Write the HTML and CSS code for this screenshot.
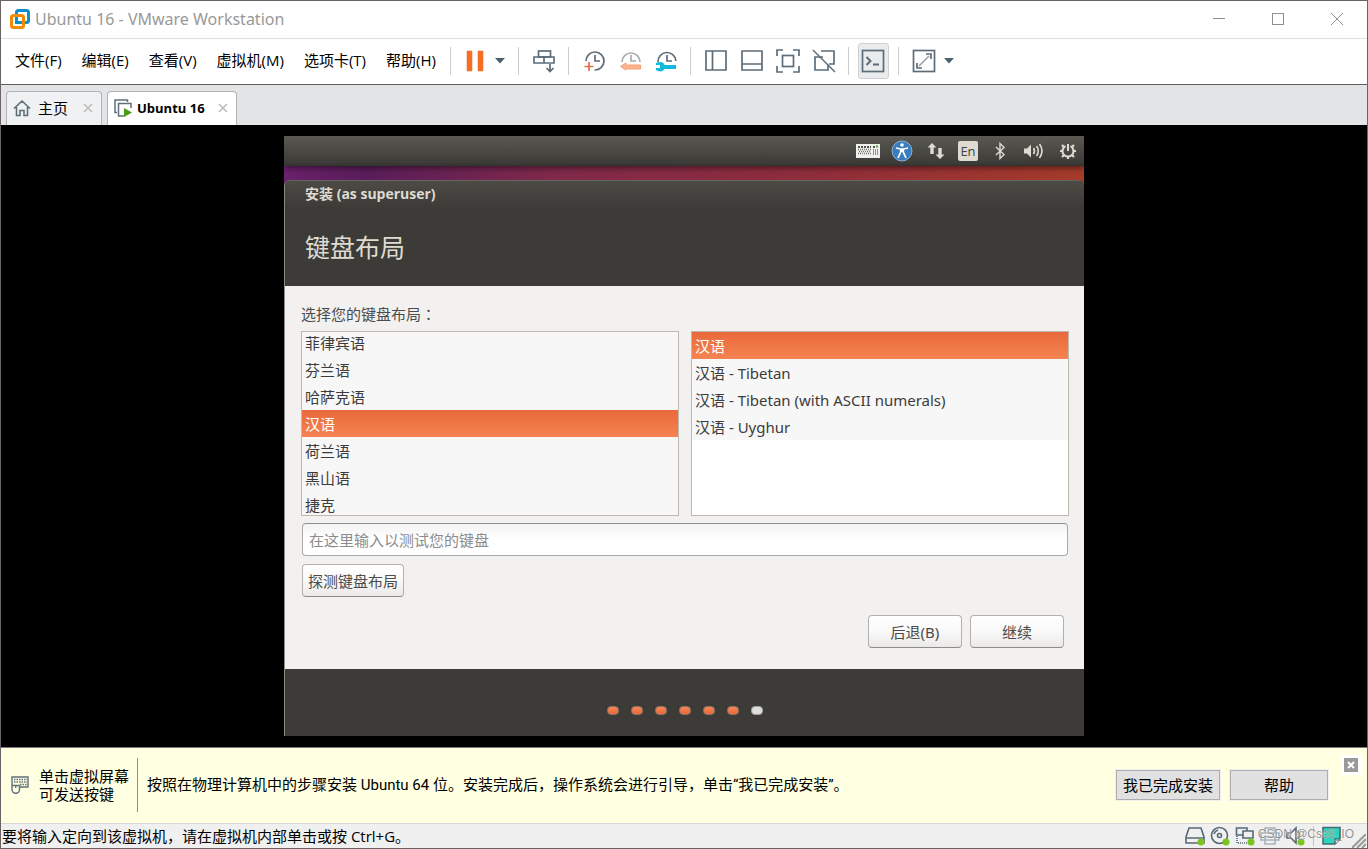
FILE: index.html
```html
<!DOCTYPE html>
<html lang="zh-CN">
<head>
<meta charset="utf-8">
<title>Ubuntu 16 - VMware Workstation</title>
<link rel="stylesheet" href="styles.css">
</head>
<body>
<div class="app">
  <header class="titlebar">
    <svg class="logo" width="22" height="22" viewBox="0 0 22 22" fill="none" stroke-width="3"><rect x="7.500" y="2.500" width="12" height="12" rx="2" stroke="#0e8fc9"/><rect x="2.500" y="7.500" width="12" height="12" rx="2" stroke="#f38b00"/><path d="M7.500 11V14.500H12" stroke="#0e8fc9"/></svg>
    <h1 class="app-title">Ubuntu 16 - VMware Workstation</h1>
    <div class="window-controls">
      <button class="win-btn" aria-label="最小化"><svg width="14" height="14" viewBox="0 0 14 14"><path d="M1 6.500H13"/></svg></button>
      <button class="win-btn" aria-label="最大化"><svg width="14" height="14" viewBox="0 0 14 14"><rect x="1.500" y="1.500" width="11" height="11"/></svg></button>
      <button class="win-btn" aria-label="关闭"><svg width="14" height="14" viewBox="0 0 14 14"><path d="M1 1L13 13M13 1L1 13"/></svg></button>
    </div>
  </header>

  <div class="menubar">
    <nav class="menus">
      <button class="menu">文件(F)</button>
      <button class="menu">编辑(E)</button>
      <button class="menu">查看(V)</button>
      <button class="menu">虚拟机(M)</button>
      <button class="menu">选项卡(T)</button>
      <button class="menu">帮助(H)</button>
    </nav>
    <div class="toolbar">
      <div class="group power">
        <button class="tool" aria-label="暂停"><svg viewBox="0 0 24 24"><path fill="#fb6a1f" stroke="#d9853f" stroke-width=".6" d="M4 2h5v20H4zM15 2h5v20h-5z"/></svg></button>
        <button class="caret" aria-label="电源选项"><svg width="10" height="6" viewBox="0 0 10 6"><path d="M0 0H10L5 5.500Z"/></svg></button>
      </div>
      <div class="group">
        <button class="tool" aria-label="发送按键"><svg class="line" viewBox="0 0 24 24"><rect x="6.500" y="2" width="12" height="6"/><path d="M2 8H22V14H2ZM12 8V14M18 15V22M14.500 19L18 22.500L21.500 19"/></svg></button>
      </div>
      <div class="group">
        <button class="tool" aria-label="拍摄快照"><svg class="line" viewBox="0 0 24 24"><path d="M4 12A9 9 0 1 1 12.500 21M13 6V12H18"/><path stroke="#df7043" d="M7 13V22M2.500 17.500H11.500"/></svg></button>
        <button class="tool" aria-label="恢复快照"><svg class="line" viewBox="0 0 24 24"><path stroke="#a7adb1" d="M4 13A9 9 0 1 1 22 13M13 6V12H18"/><path fill="#ffb38c" stroke="#f1a17a" stroke-width="1" d="M2.500 17.500L8 14V16H22.500V20H8V21Z"/></svg></button>
        <button class="tool" aria-label="管理快照"><svg class="line" viewBox="0 0 24 24"><path d="M4 13A9 9 0 1 1 22 12M13 6V12H18"/><path fill="#12b9dd" stroke="none" d="M2 14C6 12 10 13 10.500 16H22V20H10.500C9 23 5 23 2 21V19H6V16H2Z"/></svg></button>
      </div>
      <div class="group">
        <button class="tool" aria-label="显示库"><svg class="line" viewBox="0 0 24 24"><path d="M2 2H22V21H2ZM8.500 2V21"/></svg></button>
        <button class="tool" aria-label="缩略图栏"><svg class="line" viewBox="0 0 24 24"><path d="M2 2H22V21H2ZM2 15H22"/></svg></button>
        <button class="tool" aria-label="全屏"><svg class="line" viewBox="0 0 24 24"><rect x="6.500" y="6.500" width="11" height="11"/><path d="M1 7V1H7M17 1H23V7M23 17V23H17M7 23H1V17"/></svg></button>
        <button class="tool" aria-label="Unity"><svg class="line" viewBox="0 0 24 24"><path d="M9 2H22V15H17M11 8H3V21H16V16"/><path stroke-width="1.500" d="M1 1L23 23"/></svg></button>
      </div>
      <div class="group console">
        <button class="tool pressed" aria-label="控制台视图"><svg class="line" viewBox="0 0 24 24"><rect x="1.500" y="1.500" width="21" height="21"/><path stroke-width="2" d="M5.500 8L9.500 12L5.500 16M12 15.500H18"/></svg></button>
      </div>
      <div class="group stretch">
        <button class="tool" aria-label="自由拉伸"><svg class="line" viewBox="0 0 24 24"><rect x="1.500" y="1.500" width="21" height="21"/><path d="M14 5H19V10M5 14V19H10"/><path stroke="#9ba7ad" d="M7 17L17 7"/></svg></button>
        <button class="caret" aria-label="拉伸选项"><svg width="10" height="6" viewBox="0 0 10 6"><path d="M0 0H10L5 5.500Z"/></svg></button>
      </div>
    </div>
  </div>

  <div class="tabs" role="tablist">
    <div class="tab" role="tab">
      <svg width="18" height="18" viewBox="0 0 18 18" fill="none" stroke="#5d6f7b" stroke-width="1.600"><path d="M1 9.500L9 2L17 9.500M3.500 8V16.500H7V11.500H11V16.500H14.500V8"/></svg>
      <span>主页</span>
      <button class="tab-close" aria-label="关闭主页"><svg width="10" height="10" viewBox="0 0 10 10"><path d="M1 1L9 9M9 1L1 9"/></svg></button>
    </div>
    <div class="tab active" role="tab" aria-selected="true">
      <svg width="18" height="18" viewBox="0 0 18 18" fill="none" stroke="#5d6f7b" stroke-width="1.500"><path d="M3 13.500H1V1H13.500V3"/><path d="M10 17H4.500V4.500H17V9"/><path fill="#4b9a16" stroke="none" d="M10 9L18 13.500L10 18Z"/></svg>
      <span>Ubuntu 16</span>
      <button class="tab-close" aria-label="关闭 Ubuntu 16"><svg width="10" height="10" viewBox="0 0 10 10"><path d="M1 1L9 9M9 1L1 9"/></svg></button>
    </div>
  </div>

  <main class="stage">
    <div class="guest">
      <div class="panel">
        <svg viewBox="0 0 24 14"><path fill="#efefed" d="M0 0H24V14H0Z"/><path stroke="#55554f" stroke-width="2" stroke-dasharray="2 1" d="M2 3H15M17 3H20"/><path stroke="#77776f" stroke-width="1.500" stroke-dasharray="1 1" d="M2 5.500H15M3 7.500H15M2 9.500H15M17 6H22M17 8H22M17 10H22"/><path stroke="#4da636" stroke-width="2" d="M20 2.500H22"/></svg>
        <svg viewBox="0 0 22 22"><circle cx="11" cy="11" r="10" fill="#3a7dbd" stroke="#8ab2d6"/><circle cx="11" cy="5" r="1.800" fill="#fff"/><path fill="none" stroke="#fff" stroke-width="1.700" d="M5 8L9.500 9H12.500L17 8M11 9V12M9.700 9V12L7 18M12.300 9V12L15 18"/></svg>
        <svg viewBox="0 0 18 18" fill="#dfdbd2"><path d="M5 1L9.500 5.500H6.700V12H3.300V5.500H.5ZM13 17L8.500 12.500H11.300V6H14.700V12.500H17.500Z"/></svg>
        <span class="lang">En</span>
        <svg viewBox="0 0 10 18" fill="none" stroke="#dfdbd2" stroke-width="1.400"><path d="M1 5L9 12.500L5 16.500V1.500L9 5.500L1 13"/></svg>
        <svg viewBox="0 0 22 18" fill="none" stroke="#dfdbd2" stroke-width="1.600"><path fill="#dfdbd2" stroke="none" d="M1 6.500H4L8 2.500V15.500L4 11.500H1Z"/><path d="M10.500 6Q12.500 9 10.500 12M13.500 4Q17 9 13.500 14M16.500 2Q21.500 9 16.500 16"/></svg>
        <svg viewBox="0 0 18 18" fill="none" stroke="#dfdbd2"><path stroke-width="2" d="M6.500 4.200A5.500 5.500 0 1 0 11.500 4.200M9 2V9"/><path stroke-width="2.200" d="M4.700 4.700L3 3M13.300 4.700L15 3M3.500 9H1M14.500 9H17M5 13L3 15M13 13L15 15M9 14.500V17"/></svg>
      </div>
      <section class="installer">
        <header class="installer-head">
          <div class="installer-title">安装 (as superuser)</div>
          <h2 class="page-title">键盘布局</h2>
        </header>
        <form class="installer-body">
          <div class="prompt" id="prompt">选择您的键盘布局<span class="colon" lang="zh-TW">：</span></div>
          <div class="lists">
            <div class="list scrolled">
              <ul role="listbox" aria-labelledby="prompt">
                <li role="option">菲律宾语</li>
                <li role="option">芬兰语</li>
                <li role="option">哈萨克语</li>
                <li role="option" class="selected" aria-selected="true">汉语</li>
                <li role="option">荷兰语</li>
                <li role="option">黑山语</li>
                <li role="option">捷克</li>
              </ul>
            </div>
            <div class="list">
              <ul role="listbox" aria-label="布局变体">
                <li role="option" class="selected" aria-selected="true">汉语</li>
                <li role="option">汉语 - Tibetan</li>
                <li role="option">汉语 - Tibetan (with ASCII numerals)</li>
                <li role="option">汉语 - Uyghur</li>
              </ul>
            </div>
          </div>
          <input class="test-input" type="text" aria-label="测试键盘" placeholder="在这里输入以测试您的键盘">
          <button type="button" class="gtk-btn detect">探测键盘布局</button>
          <div class="nav-buttons">
            <button type="button" class="gtk-btn wide">后退(B)</button>
            <button type="button" class="gtk-btn wide">继续</button>
          </div>
        </form>
        <footer class="progress">
          <i class="dot"></i><i class="dot"></i><i class="dot"></i><i class="dot"></i><i class="dot"></i><i class="dot"></i><i class="dot pending"></i>
        </footer>
      </section>
    </div>
  </main>

  <aside class="hint">
    <svg width="18" height="18" viewBox="0 0 18 18" fill="none" stroke="#62717b" stroke-width="1.400"><path d="M1 9V1H17V11H9"/><path stroke-width="1.600" stroke-dasharray="1.500 1" d="M3 3.500H16M3 6H16M9 8.500H16"/><path d="M1 9.500H8.500V13.500A3.700 3.700 0 0 1 1 13.500ZM4.700 9V12"/></svg>
    <p class="hint-keys">单击虚拟屏幕<br>可发送按键</p>
    <p class="hint-text">按照在物理计算机中的步骤安装 Ubuntu 64 位。安装完成后，操作系统会进行引导，单击“我已完成安装”。</p>
    <button class="win32-btn finish">我已完成安装</button>
    <button class="win32-btn help">帮助</button>
    <button class="hint-close" aria-label="关闭提示"><svg width="14" height="14" viewBox="0 0 14 14"><rect width="14" height="14" fill="#999"/><path d="M4 4L10 10M10 4L4 10" stroke="#fff" stroke-width="2"/></svg></button>
  </aside>

  <footer class="status">
    <span class="status-text">要将输入定向到该虚拟机，请在虚拟机内部单击或按 Ctrl+G。</span>
    <div class="devices">
      <svg viewBox="0 0 20 20"><path d="M4 2H16L19 11V17H1V11ZM1 12H19"/><circle class="led" cx="16" cy="16" r="3.500"/></svg>
      <svg viewBox="0 0 20 20"><circle cx="9.500" cy="9.500" r="8"/><circle cx="9.500" cy="9.500" r="2"/><path d="M4 8Q5 5 8 4"/><circle class="led" cx="16" cy="16" r="3.500"/></svg>
      <svg viewBox="0 0 20 20"><path d="M8 9H1.500V2H12V5M8 5H18V12H8Z"/><path stroke-dasharray="1 1" d="M2 10V17H12"/><circle class="led" cx="16" cy="16" r="3.500"/></svg>
      <svg class="off" viewBox="0 0 20 20"><path d="M5 7V2H15V7M1 7H19V14H1ZM5 11H15V18H5Z"/></svg>
      <svg viewBox="0 0 20 20"><path d="M2 7H6L11 2V17L6 12H2ZM13 5Q16 9 13 13"/><circle class="led" cx="16" cy="16" r="3.500"/></svg>
      <span class="divider"></span>
      <svg viewBox="0 0 20 20"><path fill="#2cd4bd" stroke="#466b72" d="M1 1.500H18V13L13 18H1Z"/><path stroke="#466b72" fill="#fff" d="M13 18V13H18"/></svg>
    </div>
    <svg class="grip" width="14" height="14" viewBox="0 0 14 14"><path d="M0 14L14 0M5 14L14 5M10 14L14 10"/></svg>
    <span class="watermark">CSDN @Csc8_IO</span>
  </footer>
</div>
</body>
</html>
```
FILE: styles.css
```css
* { box-sizing: border-box; }
body {
  margin: 0;
  font: 15px/18px "Noto Sans", "Noto Sans CJK SC", sans-serif;
  color: #000;
}
h1, h2, p, ul { margin: 0; padding: 0; font-weight: 400; }
ul { list-style: none; }
button { font: inherit; color: inherit; background: none; border: 0; padding: 0; }
svg { display: block; flex: none; }

.app {
  display: flex;
  flex-direction: column;
  min-height: 100vh;
  border: 1px solid #6b6265;
  background: #fff;
}

/* Title bar */
.titlebar {
  display: flex;
  align-items: center;
  height: 38px;
  padding: 0 1px 2px 8px;
  border-bottom: 1px solid #e0e0e0;
}
.app-title { margin-left: 4px; font-size: 16px; color: #999; }
.window-controls { display: flex; margin-left: auto; }
.win-btn { display: flex; align-items: center; justify-content: center; width: 59px; height: 34px; }
.win-btn svg { fill: none; stroke: #8f8f8f; }

/* Menus and toolbar */
.menubar {
  display: flex;
  align-items: center;
  height: 46px;
  padding: 0 0 2px 14px;
  border-bottom: 1px solid #5f5f63;
}
.menus { display: flex; gap: 20px; margin-right: 14px; padding-bottom: 2px; }
.menu { white-space: nowrap; font-size: 15px; font-family: "Open Sans", "Noto Sans CJK SC", sans-serif; }
.toolbar { display: flex; }
.group {
  display: flex;
  align-items: center;
  gap: 12px;
  height: 28px;
  padding: 0 12px 0 13px;
  border-left: 1px solid #ccc;
}
.group.power { gap: 6px; padding: 0 11px 0 12px; }
.group.console { padding: 0 9px; }
.group.stretch { gap: 6px; }
.tool { width: 24px; height: 24px; }
.tool svg { width: 24px; height: 24px; }
.tool.pressed {
  display: flex;
  align-items: center;
  justify-content: center;
  width: 31px;
  height: 36px;
  background: #eaebec;
  border: 1px solid #d0d0d0;
  border-radius: 3px;
}
.line { fill: none; stroke: #5c6d79; stroke-width: 1.7; }
.caret { display: flex; justify-content: center; width: 14px; }
.caret svg { fill: #4d606e; }

/* Tabs */
.tabs { display: flex; align-items: flex-end; gap: 5px; height: 40px; padding-left: 5px; background: #e3e4e6; }
.tab {
  display: flex;
  align-items: center;
  gap: 7px;
  height: 34px;
  padding: 0 8px 2px 6px;
  background: #f0f1f2;
  border: 1px solid #b1b3b5;
  border-bottom: 0;
  border-radius: 4px 4px 0 0;
}
.tab.active { gap: 5px; background: #fff; font: bold 13px/18px "Open Sans", sans-serif; }
.tab-close { margin-left: 8px; }
.tab-close svg { fill: none; stroke: #bdbdbd; stroke-width: 1.6; }

/* Guest display */
.stage { flex: 1; display: flex; justify-content: center; padding: 11px 0; background: #000; border-bottom: 1px solid #777; }
.guest {
  display: flex;
  flex-direction: column;
  width: 100%;
  max-width: 800px;
  background: linear-gradient(90deg, #6b216b, #5a1d5b 10%, #822a4a 35%, #8f2d3c 65%, #a63b2a);
}
.panel {
  display: flex;
  align-items: center;
  justify-content: flex-end;
  gap: 10px;
  height: 30px;
  padding-right: 4px;
  background: linear-gradient(#5a5953, #3c3b37 90%, #32322e);
  box-shadow: 0 2px 6px rgba(0, 0, 0, .5);
}
.panel svg { width: 24px; height: 18px; }
.panel svg:nth-child(1) { height: 14px; }
.panel svg:nth-child(2) { height: 22px; }
.lang {
  width: 20px;
  height: 20px;
  border-radius: 2px;
  background: #dfdbd2;
  color: #45443f;
  font: 13px/20px "Open Sans", sans-serif;
  text-align: center;
}
.installer {
  flex: 1;
  display: flex;
  flex-direction: column;
  margin-top: 14px;
  border-left: 1px solid #8d8983;
  border-radius: 6px 6px 0 0;
  overflow: hidden;
  background: #3c3b37;
}
.installer-head {
  height: 106px;
  padding: 5px 20px 0;
  background: linear-gradient(#4c4b46, #3c3b37 28px);
  box-shadow: inset 0 1px #65645e;
  color: #dfdbd2;
}
.installer-title { font: bold 14px/18px "Open Sans", "Noto Sans CJK SC", sans-serif; }
.page-title { margin-top: 26px; font: 25px/34px "Noto Sans CJK SC", sans-serif; }
.installer-body {
  flex: 1;
  display: flex;
  flex-direction: column;
  align-items: stretch;
  padding: 19px 15px 21px 16px;
  background: #f2f1f0;
  color: #4c4c4c;
}
.prompt { line-height: 18px; }
.colon { font-family: "Noto Sans CJK TC", sans-serif; }
.lists { display: grid; grid-template-columns: 1fr 1fr; gap: 12px; margin-top: 8px; }
.list { height: 185px; overflow: hidden; border: 1px solid #bfb8b1; background: #fff; }
.list.scrolled ul { margin-top: -3px; }
.list li { height: 27px; padding: 1px 3px 0; line-height: 27px; background: #f7f7f7; color: #3c3c3c; white-space: nowrap; }
.list li.selected { background: linear-gradient(#e9693a, #f58452); color: #fff; }
.test-input {
  height: 33px;
  margin: 7px 1px 0;
  padding: 0 6px;
  border: 1px solid #aaa;
  border-top-color: #8f8f8f;
  border-radius: 4px;
  background: linear-gradient(#f3f3f3, #fff 50%);
  font: inherit;
}
.test-input::placeholder { color: #8c8c8c; }
.gtk-btn {
  height: 33px;
  border: 1px solid #b3b0ad;
  border-bottom-color: #8e8c8a;
  border-radius: 4px;
  background: linear-gradient(#fff, #f9f9f9 50%, #ebe9e8);
  color: #4c4c4c;
}
.detect { align-self: flex-start; margin: 8px 1px 0; padding: 0 5px; }
.wide { width: 94px; }
.nav-buttons { display: flex; justify-content: flex-end; gap: 8px; margin-top: auto; padding-right: 5px; }
.progress { display: flex; justify-content: center; gap: 12px; height: 67px; padding-top: 37px; }
.dot { width: 12px; height: 9px; border: 1px solid #8d7468; border-radius: 4px; background: linear-gradient(#f58452, #e9693a); }
.dot.pending { background: #dedede; border-color: #a0a09c; }

/* Easy-install hint */
.hint { position: relative; display: flex; align-items: center; height: 75px; padding: 0 39px 2px 10px; background: #ffffe1; }
.hint-keys { margin-left: 10px; padding: 9px 8px 9px 0; border-right: 1px solid #8d8d8d; }
.hint-text { flex: 1; margin-left: 9px; font-family: Roboto, "Noto Sans CJK SC", sans-serif; }
.win32-btn { height: 30px; border: 1px solid #adadad; background: #e1e1e1; outline: 1px solid #f0f0ee; }
.finish { width: 104px; }
.help { width: 98px; margin-left: 10px; }
.hint-close { position: absolute; top: 7px; right: 6px; padding: 3px; background: #fff; }

/* Status bar */
.status { position: relative; display: flex; align-items: center; height: 25px; padding: 0 1px; background: #f0f0f0; border-top: 1px solid #d7d7d7; }
.status-text { font-family: "Open Sans", "Noto Sans CJK SC", sans-serif; }
.devices { display: flex; gap: 5px; margin-left: auto; }
.devices svg { width: 20px; height: 20px; fill: none; stroke: #566975; stroke-width: 1.6; }
.devices .led { fill: #7bc41f; stroke: none; }
.devices .off { opacity: .45; }
.divider { width: 1px; margin: 0 3px; background: #c4c4c4; }
.grip { align-self: flex-end; margin-left: 10px; stroke: #999; stroke-width: 2; }
.watermark { position: absolute; right: 13px; bottom: 6px; font: 12px/16px "Liberation Sans", sans-serif; color: rgba(125, 125, 125, .85); text-shadow: 0 0 1px #fff; }
```
